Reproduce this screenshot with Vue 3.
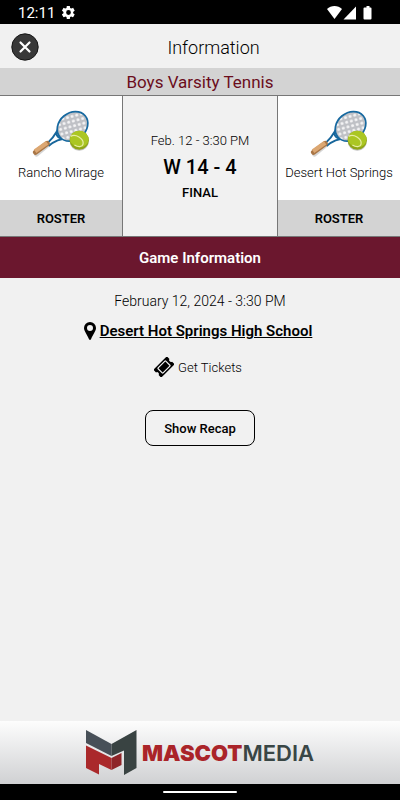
<script setup>
import { ref } from 'vue';

const game = ref({
  sport: 'Boys Varsity Tennis',
  shortDate: 'Feb. 12 - 3:30 PM',
  longDate: 'February 12, 2024 - 3:30 PM',
  score: 'W 14 - 4',
  status: 'FINAL',
  location: 'Desert Hot Springs High School',
});

const teams = [
  { id: 'home', name: 'Rancho Mirage' },
  { id: 'away', name: 'Desert Hot Springs' },
];
</script>

<template>
  <div class="screen">
    <!-- Device status bar -->
    <div class="status-bar">
      <span class="clock">12:11</span>
      <svg class="gear" viewBox="0 0 24 24" width="15" height="15">
        <path fill="#fff" fill-rule="evenodd" d="M19.4 13c.1-.3.1-.7.1-1s0-.7-.1-1l2.3-1.7c.2-.2.3-.5.1-.7l-2.2-3.8c-.1-.2-.4-.3-.7-.2l-2.6 1.1c-.6-.4-1.1-.8-1.7-1L14.2 1.9c0-.2-.3-.4-.6-.4H9.8c-.3 0-.5.2-.6.4L8.8 4.7c-.6.2-1.2.6-1.7 1L4.5 4.6c-.3-.1-.5 0-.7.2L1.6 8.6c-.1.2-.1.5.1.7L4 11c-.1.3-.1.7-.1 1s0 .7.1 1l-2.3 1.7c-.2.2-.2.5-.1.7l2.2 3.8c.1.2.4.3.7.2l2.6-1.1c.5.4 1.1.8 1.7 1l.4 2.8c0 .2.3.4.6.4h3.8c.3 0 .5-.2.6-.4l.4-2.8c.6-.2 1.2-.6 1.7-1l2.6 1.1c.3.1.5 0 .7-.2l2.2-3.8c.1-.2.1-.5-.1-.7zM12 8.2a3.8 3.8 0 1 1 0 7.6 3.8 3.8 0 0 1 0-7.6z" />
      </svg>
      <svg class="signals" viewBox="0 0 46 14" width="46" height="14">
        <path fill="#fff" d="M0 3C4-1 11-1 15 3L7.5 13z" />
        <path fill="#fff" d="M29 .5V13.5H16.5z" />
        <path fill="#fff" d="M37.5 1.5h2V0h3v1.5h1a1 1 0 0 1 1 1v10a1 1 0 0 1-1 1h-6a1 1 0 0 1-1-1v-10a1 1 0 0 1 1-1z" />
      </svg>
    </div>

    <header class="header">
      <button class="close" type="button" aria-label="Close">
        <svg viewBox="0 0 28 28" width="28" height="28">
          <circle cx="14" cy="14" r="13.2" fill="#383838" stroke="#161616" />
          <path d="M9.5 9.5l9 9M18.5 9.5l-9 9" stroke="#fff" stroke-width="2.2" stroke-linecap="round" />
        </svg>
      </button>
      <h1 class="title">Information</h1>
    </header>

    <h2 class="sport">{{ game.sport }}</h2>

    <section class="matchup">
      <div v-for="team in teams" :key="team.id" :class="['team', team.id]">
        <div class="team-info">
          <svg class="racket" viewBox="0 0 60 50" width="58" height="48">
            <defs>
              <pattern :id="'strings-' + team.id" width="5" height="5" patternUnits="userSpaceOnUse" patternTransform="rotate(25)">
                <rect width="5" height="5" fill="#bfc1c6" />
                <circle cx="2.5" cy="2.5" r="1.6" fill="#f5f5f6" />
              </pattern>
            </defs>
            <path d="M4.5 46l12-10" stroke="#999" stroke-width="5" stroke-linecap="round" opacity=".4" />
            <path d="M15 35.5Q22 29 26.5 21M17 37.5Q26 30 37 29.5M25 24q1 6 8 6" fill="none" stroke="#17669b" stroke-width="2" />
            <ellipse cx="42" cy="17" rx="17.2" ry="14" transform="rotate(-40 42 17)" :fill="`url(#strings-${team.id})`" stroke="#1769a0" stroke-width="1.8" />
            <path d="M3.5 44L15.5 35" stroke="#a97646" stroke-width="5.5" stroke-linecap="round" />
            <path d="M3 43L15.5 34" stroke="#dca772" stroke-width="4.5" />
            <circle cx="49" cy="32.5" r="10" fill="#777" opacity=".45" />
            <circle cx="49" cy="31.5" r="10" fill="#8fa516" />
            <path d="M39.5 28.5a10 10 0 0 1 19 0q1 7-5 9.5c-4 2-11 0-14-5.5z" fill="#abc623" />
            <path d="M40 27.5c5-3 14 2 13 8-1 3.5-5 3.5-9 1" fill="none" stroke="#e6eda5" stroke-width="1.3" />
          </svg>
          <div class="team-name">{{ team.name }}</div>
        </div>
        <button class="roster" type="button">ROSTER</button>
      </div>
      <div class="result">
        <div class="short-date">{{ game.shortDate }}</div>
        <div class="score">{{ game.score }}</div>
        <div class="final">{{ game.status }}</div>
      </div>
    </section>

    <h2 class="section-title">Game Information</h2>

    <main class="details">
      <div class="long-date">{{ game.longDate }}</div>
      <div class="row">
        <svg viewBox="0 0 12 18" width="12" height="18">
          <path fill-rule="evenodd" d="M6 0a6 6 0 0 1 6 6c0 3-3.5 7-5 11.3q-1 1.4-2 0C3.5 13 0 9 0 6a6 6 0 0 1 6-6zM6 3a3 3 0 1 0 0 6 3 3 0 0 0 0-6z" />
        </svg>
        <a class="location" href="#">{{ game.location }}</a>
      </div>
      <a class="row tickets" href="#">
        <svg viewBox="0 0 20 20" width="20" height="20">
          <g transform="rotate(-45 10 10)">
            <path d="M1.5 4.5h17a1 1 0 0 1 1 1v2.7a1.9 1.9 0 0 0 0 3.7v2.6a1 1 0 0 1-1 1h-17a1 1 0 0 1-1-1v-2.6a1.9 1.9 0 0 0 0-3.7V5.5a1 1 0 0 1 1-1z" />
            <rect x="4.6" y="6.5" width="10.8" height="7" rx=".6" fill="none" stroke="#f1f1f1" stroke-width="1.2" />
          </g>
        </svg>
        <span>Get Tickets</span>
      </a>
      <button class="recap" type="button">Show Recap</button>
    </main>

    <footer class="sponsor">
      <svg viewBox="0 0 51 47" width="51" height="47">
        <path fill="#485058" d="M0 1l25.5 14v12L0 14z" />
        <path fill="#394342" d="M50.5 1v38L38 46V21.5L25.5 27V15z" />
        <path fill="#aa292b" d="M0 16.5L25.5 29v12L13 35v10.5L0 39z" />
        <path fill="#8e2428" d="M25.5 29L35.5 24v12L25.5 41z" />
      </svg>
      <div class="brand"><strong>MASCOT</strong>MEDIA</div>
    </footer>
    <div class="nav-bar"><span class="nav-handle"></span></div>
  </div>
</template>

<style>
body {
  margin: 0;
}
</style>

<style scoped>
.screen {
  display: flex;
  flex-direction: column;
  min-height: 100vh;
  background: #f1f1f1;
  color: #000;
  font-family: Roboto, "Liberation Sans", sans-serif;
  font-size: 13px;
  font-weight: 300;
}

h1,
h2 {
  margin: 0;
}

button {
  padding: 0;
  border: 0;
  color: #000;
  font-family: inherit;
  cursor: pointer;
}

svg {
  display: block;
  flex-shrink: 0;
}

.status-bar {
  display: flex;
  align-items: center;
  height: 24px;
  padding: 1px 27px 0 18px;
  box-sizing: border-box;
  background: #000;
  color: #fff;
}

.clock {
  font-size: 15px;
  font-weight: 400;
}

.gear {
  margin-left: 6px;
}

.signals {
  margin-left: auto;
}

.header {
  display: flex;
  align-items: center;
  height: 44px;
  padding: 2px 12px 0 11px;
  box-sizing: border-box;
}

.close {
  background: none;
}

.title {
  flex: 1;
  font-size: 18px;
  font-weight: 300;
  text-align: center;
}

.sport {
  background: #d3d3d3;
  color: #6b0d1c;
  font-size: 17px;
  font-weight: 400;
  line-height: 28px;
  text-align: center;
}

.matchup {
  display: grid;
  grid-template-columns: 122px 1fr 122px;
  border-top: 1px solid #777;
  border-bottom: 1px solid #777;
  margin-top: -1px;
}

.team {
  display: flex;
  flex-direction: column;
  grid-row: 1;
  background: #fff;
}

.home {
  grid-column: 1;
}

.away {
  grid-column: 3;
}

.team-info {
  display: flex;
  flex-direction: column;
  align-items: center;
  height: 104px;
  padding-top: 14px;
  box-sizing: border-box;
}

.team-name {
  margin-top: 7px;
  line-height: 16px;
  white-space: nowrap;
}

.roster {
  height: 36px;
  background: #d3d3d3;
  font-size: 13px;
  font-weight: 600;
}

.result {
  display: flex;
  flex-direction: column;
  grid-column: 2;
  grid-row: 1;
  align-items: center;
  padding-top: 37px;
  border: solid #777;
  border-width: 0 1px;
}

.short-date {
  line-height: 16px;
}

.score {
  margin-top: 6px;
  font-size: 20px;
  font-weight: 500;
  line-height: 24px;
}

.final {
  margin-top: 6px;
  font-weight: 500;
  line-height: 16px;
}

.section-title {
  padding-top: 1px;
  background: #6b172e;
  color: #fff;
  font-size: 15px;
  font-weight: 600;
  line-height: 40px;
  text-align: center;
}

.details {
  display: flex;
  flex: 1;
  flex-direction: column;
  align-items: center;
  padding-top: 13px;
}

.long-date {
  font-size: 14px;
  line-height: 20px;
}

.row {
  display: flex;
  align-items: center;
  gap: 4px;
  height: 20px;
  margin-top: 10px;
  padding-right: 4px;
}

.location {
  color: #000;
  font-size: 15px;
  font-weight: 600;
}

.tickets {
  margin-top: 16px;
  color: #000;
  text-decoration: none;
}

.recap {
  width: 110px;
  height: 36px;
  margin-top: 33px;
  border: 1px solid #000;
  border-radius: 8px;
  background: transparent;
  font-size: 13px;
  font-weight: 500;
}

.sponsor {
  display: flex;
  align-items: center;
  justify-content: center;
  gap: 5px;
  height: 63px;
  background: linear-gradient(#fdfdfd, #d0d1d3);
}

.brand {
  color: #394645;
  font-family: Inter, sans-serif;
  font-size: 22px;
  font-weight: 600;
}

.brand strong {
  color: #aa2429;
  font-weight: 900;
}

.nav-bar {
  display: flex;
  align-items: center;
  justify-content: center;
  height: 16px;
  background: #000;
}

.nav-handle {
  width: 74px;
  height: 2px;
  border-radius: 2px;
  background: #fff;
}
</style>
